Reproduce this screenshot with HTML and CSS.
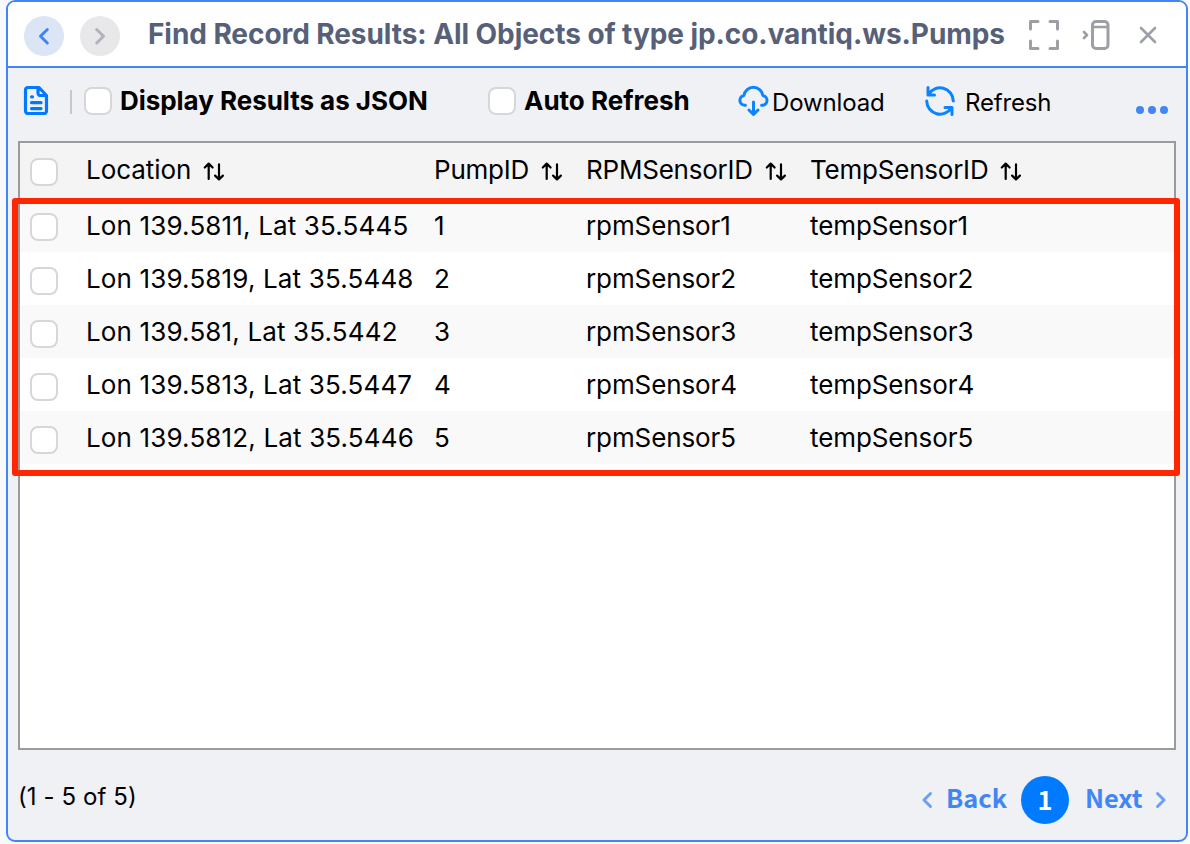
FILE: index.html
```
<!DOCTYPE html>
<html lang="en">
<head>
<meta charset="utf-8">
<title>Find Record Results</title>
<link rel="stylesheet" href="styles.css">
</head>
<body>
<svg class="defs" width="0" height="0">
  <symbol id="sort" viewBox="0 0 22 20"><path d="M5.700 17V1.800M1.800 5.500 5.700 1.600 9.600 5.500M16 2.300V17.500M12.100 13.600l3.900 3.900 3.900-3.900" fill="none" stroke="currentColor" stroke-width="2.200" stroke-linecap="round" stroke-linejoin="round"/></symbol>
</svg>
<main class="panel">
  <header class="titlebar">
    <span class="nav nav-prev"><svg width="40" height="40"><path d="M23.300 13.500 16.500 20.200l6.800 6.800"/></svg></span>
    <span class="nav nav-next"><svg width="40" height="40"><path d="m16.700 13.500 6.800 6.700-6.800 6.800"/></svg></span>
    <h1 class="title">Find Record Results: All Objects of type jp.co.vantiq.ws.Pumps</h1>
    <div class="window-tools">
      <svg width="32" height="32"><path d="M2.500 10V2.500H10M22 2.500h7.500V10M29.500 22v7.500H22M10 29.500H2.500V22" stroke-width="3"/></svg>
      <svg class="dock" width="30" height="32"><path d="m2 13 3 3-3 3" stroke-width="2.700"/><rect x="10.500" y="2.500" width="15.500" height="27" rx="3.500" stroke-width="3"/><path d="M11 8h14.500" stroke-width="2.600"/></svg>
      <svg class="close" width="18" height="18"><path d="m2 2 14 14M16 2 2 16" stroke-width="2.600"/></svg>
    </div>
  </header>
  <div class="toolbar">
    <svg class="doc" width="26" height="32"><path d="M5 2.500H16L23.500 10.500V26a2.500 2.500 0 0 1-2.500 2.500H5a2.500 2.500 0 0 1-2.500-2.500V5a2.500 2.500 0 0 1 2.500-2.500M15 3v5a2.500 2.500 0 0 0 2.500 2.500h5.500M8.500 11.800h1M8.500 17.700h9.500M8.500 23.600h9.500"/></svg>
    <span class="divider"></span>
    <label class="option option-json"><span class="check"></span><b>Display Results as JSON</b></label>
    <label class="option option-auto"><span class="check"></span><b>Auto Refresh</b></label>
    <span class="action download"><svg width="32" height="32"><path d="M7.400 20.300H6.500a5 5 0 0 1-.5-9.900 9.500 9.500 0 0 1 18.800 0A5 5 0 0 1 24.600 20.300h-1M15.500 17v11.500M11 25l4.500 4.500 4.500-4.500"/></svg><span>Download</span></span>
    <span class="action refresh"><svg width="32" height="32"><path d="M4 2.500v7.500h6.500M4.500 9.500A13.300 13.300 0 0 1 29.300 16M2.700 16A13.300 13.300 0 0 0 27.500 22.500M28 29.500V22.500h-7"/></svg><span>Refresh</span></span>
    <span class="more"><i></i><i></i><i></i></span>
  </div>
  <section class="results">
    <div class="row head"><span class="check"></span><span class="first">Location<svg class="sort"><use href="#sort"/></svg></span><span>PumpID<svg class="sort"><use href="#sort"/></svg></span><span>RPMSensorID<svg class="sort"><use href="#sort"/></svg></span><span>TempSensorID<svg class="sort"><use href="#sort"/></svg></span></div>
    <div class="row"><span class="check"></span><span class="location">Lon 139.5811, Lat 35.5445</span><span>1</span><span>rpmSensor1</span><span>tempSensor1</span></div>
    <div class="row"><span class="check"></span><span class="location">Lon 139.5819, Lat 35.5448</span><span>2</span><span>rpmSensor2</span><span>tempSensor2</span></div>
    <div class="row"><span class="check"></span><span class="location">Lon 139.581, Lat 35.5442</span><span>3</span><span>rpmSensor3</span><span>tempSensor3</span></div>
    <div class="row"><span class="check"></span><span class="location">Lon 139.5813, Lat 35.5447</span><span>4</span><span>rpmSensor4</span><span>tempSensor4</span></div>
    <div class="row"><span class="check"></span><span class="location">Lon 139.5812, Lat 35.5446</span><span>5</span><span>rpmSensor5</span><span>tempSensor5</span></div>
    <div class="highlight"></div>
  </section>
  <footer class="footer">
    <span class="count">(1 - 5 of 5)</span>
    <nav class="pager">
      <svg width="12" height="18"><path d="M9.500 2.500 3 9l6.500 6.500"/></svg><span class="back">Back</span><span class="page">1</span><span class="next">Next</span><svg width="12" height="18"><path d="m2.500 2.500 6.500 6.500-6.500 6.500"/></svg>
    </nav>
  </footer>
</main>
</body>
</html>
```
FILE: styles.css
```
* { box-sizing: border-box; }
body { margin: 0; height: 844px; padding: 0 2px 2px 6px; background: #f8f9fb; font-family: Inter, sans-serif; color: #000; overflow: hidden; }
.defs { position: absolute; }
svg { display: block; flex: none; fill: none; stroke-linecap: round; stroke-linejoin: round; }
.panel { height: 842px; border: 2px solid #4285f4; border-radius: 9px; background: #f0f1f5; overflow: hidden; display: flex; flex-direction: column; }
.titlebar { height: 66px; flex: none; background: #fff; border-bottom: 2px solid #4285f4; display: flex; align-items: center; padding: 4px 0 0 16px; }
.nav { width: 40px; height: 40px; border-radius: 50%; }
.nav svg { stroke-width: 3; }
.nav-prev { background: #dbe5f5; stroke: #4285f4; }
.nav-next { background: #e8e8ea; stroke: #b0b3bc; margin-left: 16px; }
.title { margin: -4px 0 0 28px; width: 880px; font-size: 28px; line-height: 34px; font-weight: 700; letter-spacing: -.07px; color: #566179; white-space: nowrap; }
.window-tools { display: flex; align-items: center; margin-top: -2px; stroke: #9c9fa6; }
.window-tools .dock { margin-left: 22px; }
.window-tools .close { margin-left: 27px; }
.toolbar { height: 73px; flex: none; display: flex; align-items: flex-start; padding: 17px 18px 0 14px; }
.doc { stroke: #007bff; stroke-width: 3.2; margin-left: 1px; }
.divider { width: 2px; height: 24px; margin: 5px 0 0 21px; background: #c3c9d1; }
.option { display: flex; align-items: flex-start; font-size: 26px; line-height: 32px; white-space: nowrap; }
.option b { margin-left: 8px; }
.option-json b { letter-spacing: -.04px; }
.option .check { margin-top: 2px; }
.option-json { width: 404px; margin-left: 12px; }
.option-auto { width: 250px; }
.check { width: 28px; height: 28px; flex: none; border: 2px solid #d6d7d9; border-radius: 8px; background: #fff; }
.action { display: flex; font-size: 24px; line-height: 36px; letter-spacing: -.15px; white-space: nowrap; }
.action svg { stroke: #0a84ff; stroke-width: 3; }
.download { width: 186px; }
.download span { margin-left: 2px; }
.refresh { width: 212px; }
.refresh span { margin-left: 9px; }
.more { display: flex; gap: 4px; margin-top: 21px; }
.more i { width: 8px; height: 8px; border-radius: 50%; background: #4285f4; }
.results { position: relative; height: 609px; flex: none; margin: 0 10px; border: 2px solid #999b9d; background: #fff; }
.row { height: 53px; display: grid; grid-template-columns: 56px 348px 152px 224px 1fr; padding: 0 0 0 10px; font-size: 26px; line-height: 54px; letter-spacing: -.1px; white-space: nowrap; }
.row > span { display: flex; }
.row .location { letter-spacing: .15px; }
.row .check { margin-top: 15px; }
.row:nth-child(2) .check { margin-top: 14px; }
.row:nth-child(even) { background: #f9f9f9; }
.head { height: 56px; background: #f4f4f4; border-bottom: 1px solid #c5c8ca; letter-spacing: -.22px; }
.head .first { letter-spacing: -.05px; }
.sort { width: 22px; height: 20px; margin: 19px 0 0 12px; }
.highlight { position: absolute; left: -8px; top: 55px; width: 1168px; height: 278px; border: 6px solid #ff2600; border-radius: 3px; }
.footer { flex: 1; display: flex; justify-content: space-between; padding: 0 19px 0 10px; }
.count { margin-top: 32px; font-size: 24px; line-height: 30px; letter-spacing: .08px; }
.pager { display: flex; align-items: center; height: 48px; margin-top: 26px; font-family: "Noto Sans CJK JP", sans-serif; font-size: 25.4px; font-weight: 700; line-height: 42px; color: #4285f4; stroke: #6c9ff6; stroke-width: 3; }
.pager span { stroke: none; }
.back { margin: -6px 0 0 13px; width: 75px; }
.page { width: 48px; height: 48px; border-radius: 50%; background: #007bff; color: #fff; text-align: center; line-height: 47px; }
.next { margin: -6px 0 0 16px; width: 70px; }
```
